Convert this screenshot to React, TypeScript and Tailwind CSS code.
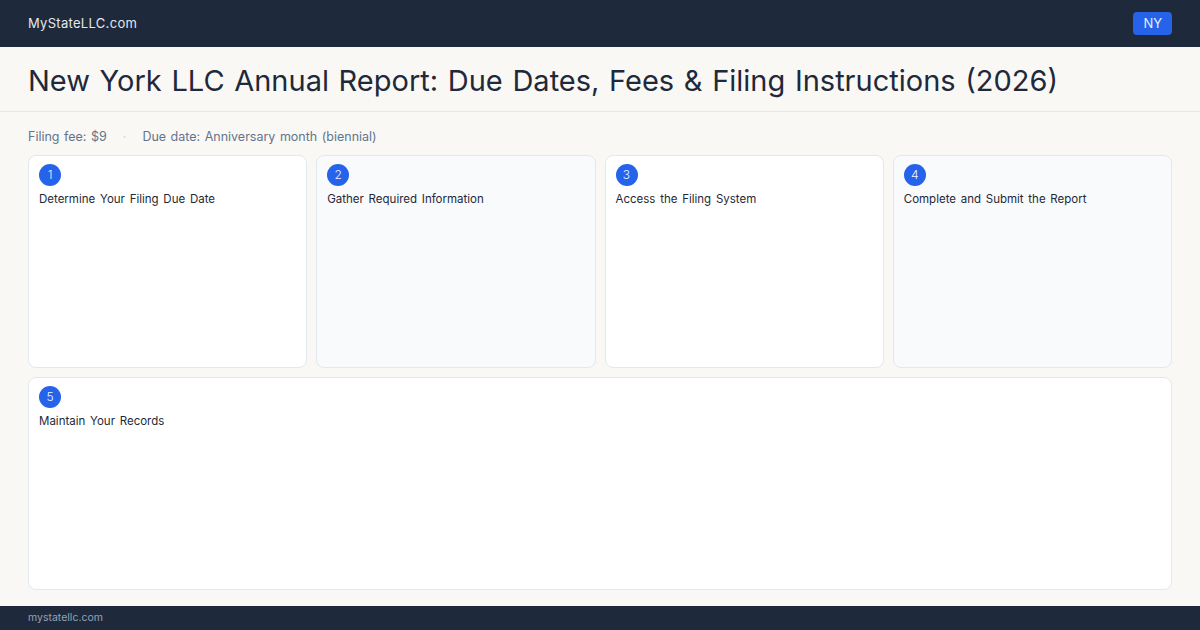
const steps = [
  'Determine Your Filing Due Date',
  'Gather Required Information',
  'Access the Filing System',
  'Complete and Submit the Report',
];

function StepCard({ n, title, tinted, className = '' }: { n: number; title: string; tinted?: boolean; className?: string }) {
  return (
    <div
      className={`rounded-lg border border-[#e2e8f0] px-[10px] py-[8px] ${tinted ? 'bg-[#f8fafc]' : 'bg-white'} ${className}`}
    >
      <div className="w-[22px] h-[22px] rounded-full bg-[#2563eb] text-[#f1f5ff] text-[12px] font-light flex items-center justify-center">
        {n}
      </div>
      <p className="mt-[5px] text-[11.5px] text-[#1f2937] [word-spacing:1.5px]">{title}</p>
    </div>
  );
}

export default function App() {
  return (
    <div className="w-[1200px] h-[630px] flex flex-col bg-[#f9f8f5] font-['Inter',sans-serif] overflow-hidden">
      <header className="h-[47px] shrink-0 bg-[#1e293b] flex items-center justify-between px-[28px]">
        <span className="text-[13px] text-[#e5e7eb] tracking-[0.3px]">MyStateLLC.com</span>
        <span className="bg-[#2563eb] text-[#e5edff] text-[13px] rounded-[4px] px-[10px] h-[23px] flex items-center">
          NY
        </span>
      </header>

      <div className="h-[65px] shrink-0 border-b border-[#e2e8f0] flex items-center px-[28px] pt-[4px]">
        <h1 className="text-[29px] text-[#1e293b] [word-spacing:1.5px]">
          New York LLC Annual Report: Due Dates, Fees &amp; Filing Instructions (2026)
        </h1>
      </div>

      <main className="flex-1 flex flex-col px-[28px] pt-[16px] pb-[16px]">
        <div className="flex items-center text-[12.5px] text-[#64748b] [word-spacing:1px] h-[18px]">
          <span>Filing fee: $9</span>
          <span className="mx-[16px] text-[#cbd5e1]">·</span>
          <span>Due date: Anniversary month (biennial)</span>
        </div>
        <div className="mt-[9px] flex-1 grid grid-cols-4 grid-rows-2 gap-[9px]">
          {steps.map((s, i) => (
            <StepCard key={s} n={i + 1} title={s} tinted={i % 2 === 1} />
          ))}
          <StepCard n={5} title="Maintain Your Records" className="col-span-4" />
        </div>
      </main>

      <footer className="h-[24px] shrink-0 bg-[#1e293b] flex items-center px-[28px]">
        <span className="text-[10.5px] text-[#94a3b8]">mystatellc.com</span>
      </footer>
    </div>
  );
}
